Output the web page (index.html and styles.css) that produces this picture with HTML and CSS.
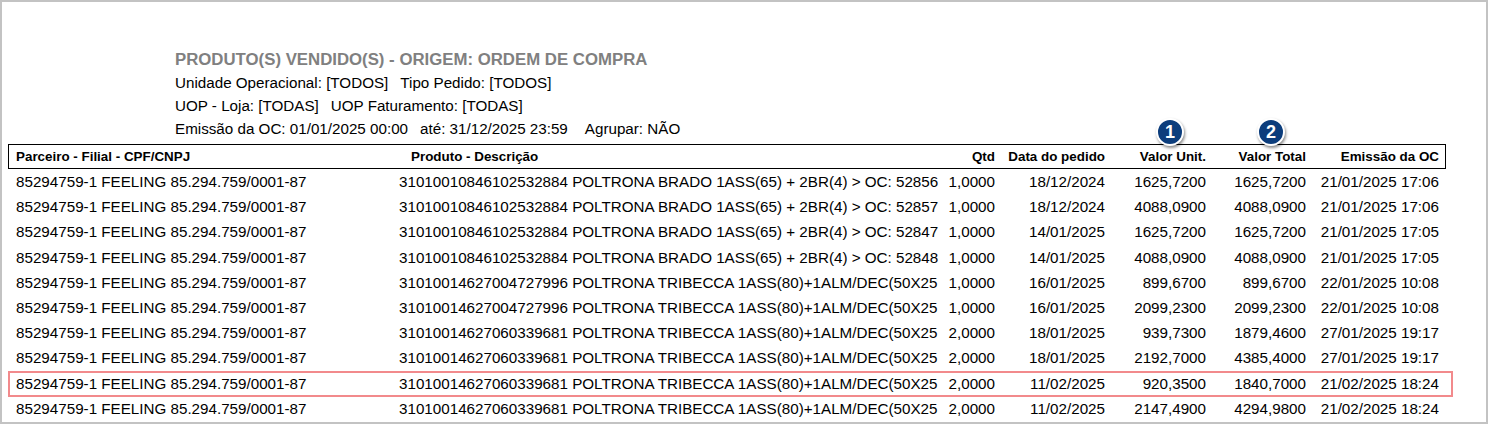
FILE: index.html
```html
<!DOCTYPE html>
<html lang="pt-BR">
<head>
<meta charset="utf-8">
<title>Produtos vendidos - Ordem de compra</title>
<link rel="stylesheet" href="styles.css">
</head>
<body>
<div class="page">
  <div class="head">
    <div class="title">PRODUTO(S) VENDIDO(S) - ORIGEM: ORDEM DE COMPRA</div>
    <div class="info">Unidade Operacional: [TODOS]<span class="sp"></span>Tipo Pedido: [TODOS]</div>
    <div class="info">UOP - Loja: [TODAS]<span class="sp"></span>UOP Faturamento: [TODAS]</div>
    <div class="info">Emissão da OC: 01/01/2025 00:00<span class="sp"></span>até: 31/12/2025 23:59<span class="sp wide"></span>Agrupar: NÃO</div>
  </div>
  <div class="table">
    <div class="row hdr">
      <div class="c c1">Parceiro - Filial - CPF/CNPJ</div>
      <div class="c c2">Produto - Descrição</div>
      <div class="c num">Qtd</div>
      <div class="c num">Data do pedido</div>
      <div class="c num mark">Valor Unit.<span class="badge">1</span></div>
      <div class="c num mark">Valor Total<span class="badge">2</span></div>
      <div class="c num">Emissão da OC</div>
      <div class="c"></div>
    </div>
    <div class="row">
      <div class="c c1">85294759-1 FEELING 85.294.759/0001-87</div>
      <div class="c c2">31010010846102532884 POLTRONA BRADO 1ASS(65) + 2BR(4) &gt; OC: 52856</div>
      <div class="c num">1,0000</div><div class="c num">18/12/2024</div><div class="c num">1625,7200</div><div class="c num">1625,7200</div><div class="c num">21/01/2025 17:06</div><div class="c"></div>
    </div>
    <div class="row">
      <div class="c c1">85294759-1 FEELING 85.294.759/0001-87</div>
      <div class="c c2">31010010846102532884 POLTRONA BRADO 1ASS(65) + 2BR(4) &gt; OC: 52857</div>
      <div class="c num">1,0000</div><div class="c num">18/12/2024</div><div class="c num">4088,0900</div><div class="c num">4088,0900</div><div class="c num">21/01/2025 17:06</div><div class="c"></div>
    </div>
    <div class="row">
      <div class="c c1">85294759-1 FEELING 85.294.759/0001-87</div>
      <div class="c c2">31010010846102532884 POLTRONA BRADO 1ASS(65) + 2BR(4) &gt; OC: 52847</div>
      <div class="c num">1,0000</div><div class="c num">14/01/2025</div><div class="c num">1625,7200</div><div class="c num">1625,7200</div><div class="c num">21/01/2025 17:05</div><div class="c"></div>
    </div>
    <div class="row">
      <div class="c c1">85294759-1 FEELING 85.294.759/0001-87</div>
      <div class="c c2">31010010846102532884 POLTRONA BRADO 1ASS(65) + 2BR(4) &gt; OC: 52848</div>
      <div class="c num">1,0000</div><div class="c num">14/01/2025</div><div class="c num">4088,0900</div><div class="c num">4088,0900</div><div class="c num">21/01/2025 17:05</div><div class="c"></div>
    </div>
    <div class="row">
      <div class="c c1">85294759-1 FEELING 85.294.759/0001-87</div>
      <div class="c c2">31010014627004727996 POLTRONA TRIBECCA 1ASS(80)+1ALM/DEC(50X25</div>
      <div class="c num">1,0000</div><div class="c num">16/01/2025</div><div class="c num">899,6700</div><div class="c num">899,6700</div><div class="c num">22/01/2025 10:08</div><div class="c"></div>
    </div>
    <div class="row">
      <div class="c c1">85294759-1 FEELING 85.294.759/0001-87</div>
      <div class="c c2">31010014627004727996 POLTRONA TRIBECCA 1ASS(80)+1ALM/DEC(50X25</div>
      <div class="c num">1,0000</div><div class="c num">16/01/2025</div><div class="c num">2099,2300</div><div class="c num">2099,2300</div><div class="c num">22/01/2025 10:08</div><div class="c"></div>
    </div>
    <div class="row">
      <div class="c c1">85294759-1 FEELING 85.294.759/0001-87</div>
      <div class="c c2">31010014627060339681 POLTRONA TRIBECCA 1ASS(80)+1ALM/DEC(50X25</div>
      <div class="c num">2,0000</div><div class="c num">18/01/2025</div><div class="c num">939,7300</div><div class="c num">1879,4600</div><div class="c num">27/01/2025 19:17</div><div class="c"></div>
    </div>
    <div class="row">
      <div class="c c1">85294759-1 FEELING 85.294.759/0001-87</div>
      <div class="c c2">31010014627060339681 POLTRONA TRIBECCA 1ASS(80)+1ALM/DEC(50X25</div>
      <div class="c num">2,0000</div><div class="c num">18/01/2025</div><div class="c num">2192,7000</div><div class="c num">4385,4000</div><div class="c num">27/01/2025 19:17</div><div class="c"></div>
    </div>
    <div class="row hl">
      <div class="c c1">85294759-1 FEELING 85.294.759/0001-87</div>
      <div class="c c2">31010014627060339681 POLTRONA TRIBECCA 1ASS(80)+1ALM/DEC(50X25</div>
      <div class="c num">2,0000</div><div class="c num">11/02/2025</div><div class="c num">920,3500</div><div class="c num">1840,7000</div><div class="c num">21/02/2025 18:24</div><div class="c"></div>
    </div>
    <div class="row">
      <div class="c c1">85294759-1 FEELING 85.294.759/0001-87</div>
      <div class="c c2">31010014627060339681 POLTRONA TRIBECCA 1ASS(80)+1ALM/DEC(50X25</div>
      <div class="c num">2,0000</div><div class="c num">11/02/2025</div><div class="c num">2147,4900</div><div class="c num">4294,9800</div><div class="c num">21/02/2025 18:24</div><div class="c"></div>
    </div>
  </div>
</div>
</body>
</html>
```
FILE: styles.css
```css
html, body {
  margin: 0;
  padding: 0;
  background: #ffffff;
}

.page {
  width: 1488px;
  height: 424px;
  box-sizing: border-box;
  border: 2px solid #c3c3c3;
  background: #ffffff;
  overflow: hidden;
  font-family: "Liberation Sans", Arial, sans-serif;
  color: #000000;
}

.head {
  padding: 46px 0 0 173px;
}

.title {
  font-size: 16.8px;
  font-weight: bold;
  color: #808080;
  line-height: 23px;
  white-space: nowrap;
}

.info {
  font-size: 15.2px;
  line-height: 23px;
  white-space: nowrap;
}

.sp {
  display: inline-block;
  width: 12px;
}

.sp.wide {
  width: 17px;
}

.table {
  margin: 4px 0 0 6px;
  width: 1438px;
}

.row {
  display: grid;
  grid-template-columns: 387px 546px 54px 110px 101px 100px 133px 7px;
  height: 25.2px;
  align-items: center;
  font-size: 15.2px;
  white-space: nowrap;
  position: relative;
}

.row.hdr {
  box-sizing: border-box;
  height: 25px;
  border: 1px solid #000000;
  grid-template-columns: 386px 546px 54px 110px 101px 100px 133px 6px;
  font-size: 13.4px;
  font-weight: bold;
}

.c {
  overflow: hidden;
}

.c1 {
  padding-left: 8px;
}

.c2 {
  padding-left: 4px;
}

.hdr .c1 {
  padding-left: 7px;
}

.hdr .c2 {
  padding-left: 16px;
}

.num {
  text-align: right;
}

.mark {
  position: relative;
  overflow: visible;
}

.badge {
  position: absolute;
  left: 51px;
  top: -31px;
  width: 24px;
  height: 24px;
  border: 2px solid #ffffff;
  border-radius: 50%;
  background: #0c3d7c;
  color: #ffffff;
  font-size: 18px;
  font-weight: bold;
  line-height: 24px;
  text-align: center;
  box-shadow: 1px 2px 3px rgba(0, 0, 0, 0.45);
}

.row.hl::after {
  content: "";
  position: absolute;
  left: 0;
  right: -7px;
  top: 0;
  bottom: -1px;
  border: 2px solid #f28a8c;
  pointer-events: none;
}
```
